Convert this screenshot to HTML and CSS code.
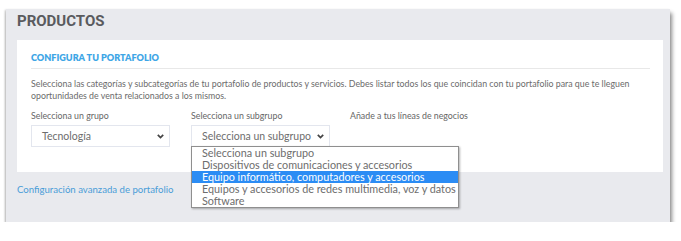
FILE: index.html
```html
<!DOCTYPE html>
<html lang="es">
<head>
<meta charset="utf-8">
<title>Productos</title>
<link rel="stylesheet" href="styles.css">
</head>
<body>
<div class="panel">
  <h1 class="title">PRODUCTOS</h1>
  <div class="card">
    <h2 class="card-title">CONFIGURA TU PORTAFOLIO</h2>
    <p class="intro">Selecciona las categorías y subcategorías de tu portafolio de productos y servicios. Debes listar todos los que coincidan con tu portafolio para que te lleguen oportunidades de venta relacionados a los mismos.</p>
    <div class="fields">
      <div class="field">
        <div class="label">Selecciona un grupo</div>
        <div class="select">
          <span>Tecnología</span>
          <svg class="chev" width="7" height="5" viewBox="0 0 7 5"><polyline points="0.8,0.8 3.5,3.6 6.2,0.8" fill="none" stroke="#444" stroke-width="1.7"/></svg>
        </div>
      </div>
      <div class="field">
        <div class="label">Selecciona un subgrupo</div>
        <div class="select open">
          <span>Selecciona un subgrupo</span>
          <svg class="chev" width="7" height="5" viewBox="0 0 7 5"><polyline points="0.8,0.8 3.5,3.6 6.2,0.8" fill="none" stroke="#444" stroke-width="1.7"/></svg>
          <ul class="options">
            <li>Selecciona un subgrupo</li>
            <li>Dispositivos de comunicaciones y accesorios</li>
            <li class="active">Equipo informático, computadores y accesorios</li>
            <li>Equipos y accesorios de redes multimedia, voz y datos</li>
            <li>Software</li>
          </ul>
        </div>
      </div>
      <div class="field">
        <div class="label">Añade a tus líneas de negocios</div>
      </div>
    </div>
  </div>
  <a class="link" href="#">Configuración avanzada de portafolio</a>
</div>
</body>
</html>
```
FILE: styles.css
```css
html, body {
  margin: 0;
  padding: 0;
  background: #ffffff;
}
body {
  font-family: "Lato", "Liberation Sans", sans-serif;
  color: #666;
}
.panel {
  margin: 9px 0 0 6px;
  width: 664px;
  height: 213px;
  box-sizing: border-box;
  padding: 0 7px 0 11px;
  background: #e9eaee;
  box-shadow: 2px 4px 4px rgba(0,0,0,0.45), -1px 1px 2px rgba(0,0,0,0.25);
}
.title {
  margin: 0;
  padding-top: 1px;
  font-family: "Roboto", "Liberation Sans", sans-serif;
  font-size: 15px;
  line-height: 22px;
  font-weight: 700;
  color: #5a5b5e;
}
.card {
  margin-top: 8px;
  background: #fff;
  height: 132px;
  box-sizing: border-box;
  padding: 12px 13px 0 14px;
}
.card-title {
  margin: 0;
  font-size: 9.1px;
  line-height: 12px;
  font-weight: 800;
  color: #3ea6e6;
  padding-bottom: 4px;
  border-bottom: 1px solid #e8e8e8;
}
.intro {
  margin: 9px 0 0;
  font-size: 8.8px;
  line-height: 12px;
  color: #6b6b6b;
}
.fields {
  margin-top: 8px;
  display: grid;
  grid-template-columns: 160px 159px 1fr;
}
.label {
  font-size: 8.8px;
  line-height: 12px;
  color: #666;
}
.select {
  position: relative;
  margin-top: 3px;
  width: 139px;
  height: 22px;
  box-sizing: border-box;
  border: 1px solid #e3e6ee;
  display: flex;
  align-items: center;
  justify-content: space-between;
  padding: 0 5px 0 10px;
  font-size: 10.5px;
  color: #6d6d6d;
}
.chev {
  display: block;
}
.options {
  position: absolute;
  top: 20px;
  left: -1px;
  width: 266px;
  margin: 0;
  padding: 0;
  list-style: none;
  background: #fff;
  border: 1px solid #8f8f8f;
  box-shadow: 1px 1px 2px rgba(0,0,0,0.3);
}
.options li {
  height: 12px;
  line-height: 12px;
  padding-left: 10px;
  font-size: 10.8px;
  color: #6d6d6d;
  white-space: nowrap;
}
.options li.active {
  background: #2b8cf4;
  color: #fff;
}
.link {
  display: block;
  margin-top: 12px;
  font-size: 9.6px;
  line-height: 12px;
  color: #4a9dd8;
  text-decoration: none;
}
```
